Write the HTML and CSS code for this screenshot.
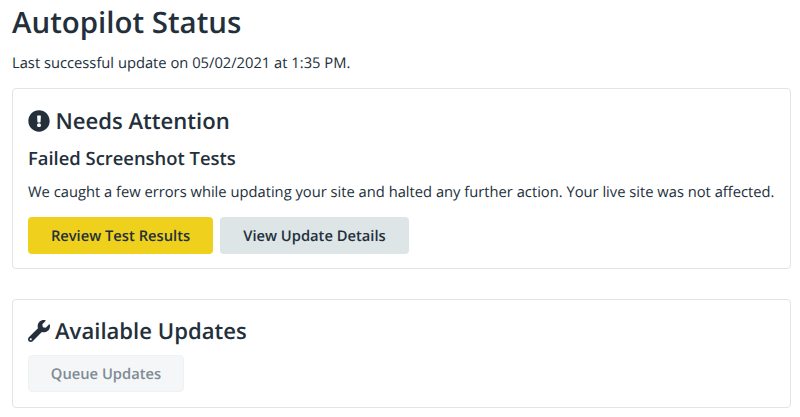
FILE: index.html
```html
<!DOCTYPE html>
<html lang="en">
<head>
<meta charset="utf-8">
<title>Autopilot Status</title>
<link rel="stylesheet" href="styles.css">
</head>
<body>
<main class="page">
  <h1 class="page-title">Autopilot Status</h1>
  <p class="last-update">Last successful update on 05/02/2021 at 1:35 PM.</p>
  <section class="card attention">
    <h2 class="card-title">
      <svg class="icon" viewBox="0 0 512 512" aria-hidden="true"><path d="M504 256c0 136.997-111.043 248-248 248S8 392.997 8 256C8 119.083 119.043 8 256 8s248 111.083 248 248zm-248 50c-25.405 0-46 20.595-46 46s20.595 46 46 46 46-20.595 46-46-20.595-46-46-46zm-43.673-165.346l7.418 136c.347 6.364 5.609 11.346 11.982 11.346h48.546c6.373 0 11.635-4.982 11.982-11.346l7.418-136c.375-6.874-5.098-12.654-11.982-12.654h-63.383c-6.884 0-12.356 5.78-11.981 12.654z"/></svg>
      <span>Needs Attention</span>
    </h2>
    <h3 class="card-subtitle">Failed Screenshot Tests</h3>
    <p class="card-text">We caught a few errors while updating your site and halted any further action. Your live site was not affected.</p>
    <div class="actions">
      <button class="button primary" type="button">Review Test Results</button>
      <button class="button secondary" type="button">View Update Details</button>
    </div>
  </section>
  <section class="card updates">
    <h2 class="card-title">
      <svg class="icon" viewBox="0 0 512 512" aria-hidden="true"><path d="M507.73 109.1c-2.24-9.03-13.54-12.09-20.12-5.51l-74.36 74.36-67.88-11.31-11.31-67.88 74.36-74.36c6.62-6.62 3.43-17.9-5.66-20.16-47.38-11.74-99.55.91-136.58 37.93-39.64 39.64-50.55 97.1-34.05 147.2L18.74 402.76c-24.99 24.99-24.99 65.51 0 90.5 24.99 24.99 65.51 24.99 90.5 0l213.21-213.21c50.12 16.71 107.47 5.68 147.37-34.22 37.07-37.07 49.7-89.32 37.91-136.73zM64 472c-13.25 0-24-10.75-24-24 0-13.26 10.75-24 24-24s24 10.74 24 24c0 13.25-10.75 24-24 24z"/></svg>
      <span>Available Updates</span>
    </h2>
    <div class="actions">
      <button class="button disabled" type="button" disabled>Queue Updates</button>
    </div>
  </section>
</main>
</body>
</html>
```
FILE: styles.css
```css
* { box-sizing: border-box; }
body {
  margin: 0;
  background: #fff;
  color: #23303b;
  font-family: "Open Sans", sans-serif;
  font-size: 14.73px;
  text-rendering: geometricPrecision;
}
h1, h2, h3, p { margin: 0; }
.page { padding: 2px 9px 0 12px; }
.page-title {
  font-size: 29.45px;
  line-height: 40px;
  font-weight: 600;
}
.last-update {
  margin-top: 10px;
  line-height: 22px;
}
.card {
  border: 1px solid #dee6e6;
  border-radius: 4px;
  padding: 15px;
}
.attention {
  height: 181px;
  margin-top: 14px;
  padding-top: 16px;
}
.updates {
  height: 109px;
  margin-top: 30px;
  padding-top: 15px;
}
.card-title {
  display: flex;
  align-items: center;
  gap: 5.5px;
  font-size: 22.1px;
  line-height: 32px;
  font-weight: 600;
}
.icon {
  width: 22px;
  height: 22px;
  fill: currentColor;
}
.updates .card-title { gap: 5px; }
.card-subtitle {
  margin-top: 10px;
  font-size: 18.4px;
  line-height: 24px;
  font-weight: 600;
}
.card-text {
  margin-top: 10px;
  line-height: 22px;
  white-space: nowrap;
}
.actions { display: flex; gap: 7px; }
.attention .actions { margin-top: 14px; }
.updates .actions { margin-top: 8px; }
.button {
  height: 37px;
  padding: 0;
  border: 1px solid transparent;
  border-radius: 4px;
  color: #23303b;
  font: 600 14.73px/22px "Open Sans", sans-serif;
  text-rendering: geometricPrecision;
}
.primary { width: 185px; background: #efd11d; }
.secondary { width: 189px; background: #dde5e7; }
.disabled {
  width: 156px;
  background: #f5f6f8;
  border-color: #eff2f4;
  color: #7f8b95;
}
```
